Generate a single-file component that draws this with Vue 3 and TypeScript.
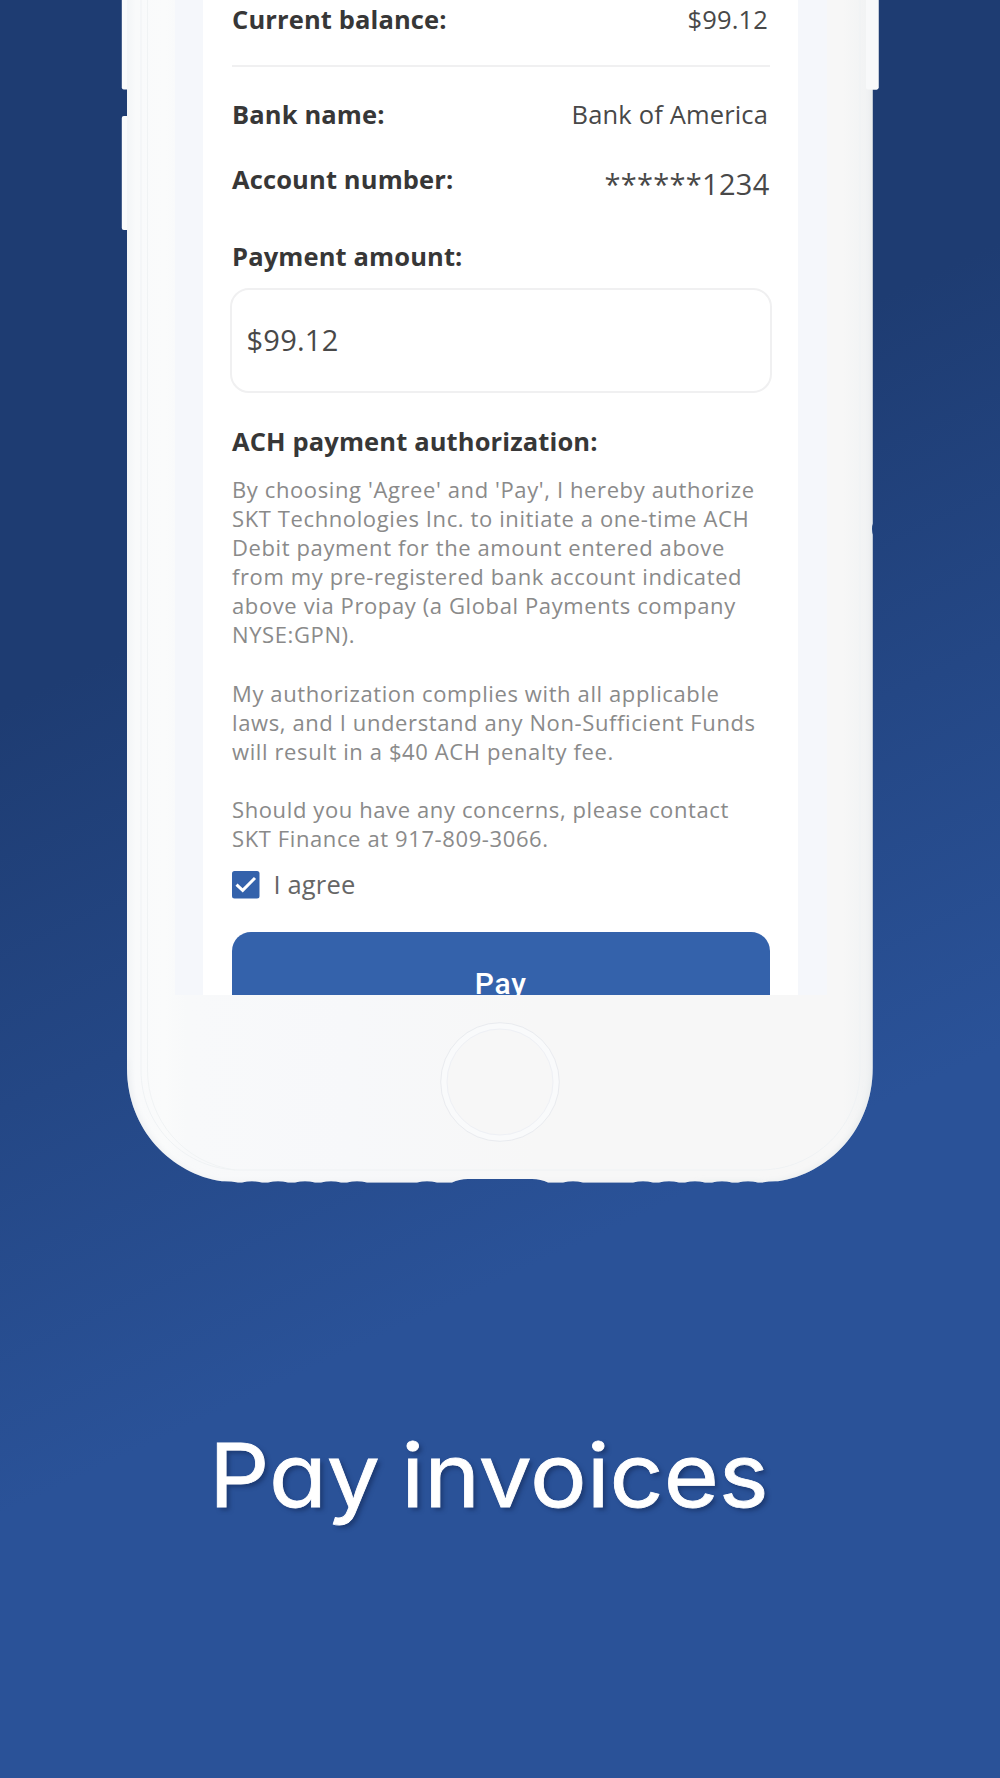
<script setup lang="ts">
interface Detail {
  label: string
  value: string
  kind: string
}

const details: Detail[] = [
  { label: 'Current balance:', value: '$99.12', kind: 'balance' },
  { label: 'Bank name:', value: 'Bank of America', kind: 'bank' },
  { label: 'Account number:', value: '******1234', kind: 'account' },
]

const terms: string[][] = [
  [
    "By choosing 'Agree' and 'Pay', I hereby authorize",
    'SKT Technologies Inc. to initiate a one-time ACH',
    'Debit payment for the amount entered above',
    'from my pre-registered bank account indicated',
    'above via Propay (a Global Payments company',
    'NYSE:GPN).',
  ],
  [
    'My authorization complies with all applicable',
    'laws, and I understand any Non-Sufficient Funds',
    'will result in a $40 ACH penalty fee.',
  ],
  [
    'Should you have any concerns, please contact',
    'SKT Finance at 917-809-3066.',
  ],
]

// Small speaker and screw recesses along the bottom edge, drawn right to left.
const recess = (x: number): string =>
  `H${x + 10} Q${x + 5} 1181.300 ${x} 1181.300 Q${x - 5} 1181.300 ${x - 10} 1182.5 `
const rightRecesses = [748, 722, 695, 669, 643, 573].map(recess).join('')
const leftRecesses = [427, 357, 331, 305, 278, 252].map(recess).join('')
const outline =
  'M872.7 -20 V1068 C872.7 1130 828 1174 778 1181.300 Q770 1181 762 1182.500 ' +
  `${rightRecesses}H548 Q541 1179 532 1179 H468 Q459 1179 452 1182.5 ${leftRecesses}` +
  'H238 Q230 1181 222 1181.300 C172 1174 127 1130 127 1068 V-20 Z'
</script>

<template>
  <main class="poster">
    <section class="phone">
      <svg class="frame" width="1000" height="1200" viewBox="0 0 1000 1200" aria-hidden="true">
        <defs>
          <linearGradient id="shell" x1="127" x2="873" y1="0" y2="0" gradientUnits="userSpaceOnUse">
            <stop offset="0" stop-color="#f3f5f7" />
            <stop offset=".012" stop-color="#f9fafb" />
            <stop offset=".05" stop-color="#fafbfb" />
            <stop offset=".08" stop-color="#f8f9fa" />
            <stop offset=".3" stop-color="#f7f8fa" />
            <stop offset=".55" stop-color="#f7f7f7" />
            <stop offset=".96" stop-color="#f7f7f7" />
            <stop offset="1" stop-color="#f0f2f3" />
          </linearGradient>
          <clipPath id="shell-clip"><path :d="outline" /></clipPath>
          <filter id="soft" x="-5%" y="-5%" width="110%" height="110%">
            <feGaussianBlur stdDeviation="3" />
          </filter>
        </defs>
        <rect x="121.8" y="-10" width="12" height="99.500" rx="2" fill="#fafbfc" />
        <rect x="121.8" y="116" width="12" height="114" rx="2" fill="#fafbfc" />
        <rect x="866" y="-10" width="12.500" height="99.500" rx="2" fill="#f8f9fa" />
        <path :d="outline" fill="url(#shell)" />
        <g clip-path="url(#shell-clip)">
          <path
            d="M700 1186 H760 C826 1186 875 1130 875 1068 V-20"
            fill="none" stroke="#dde2e6" stroke-opacity=".7" stroke-width="6" filter="url(#soft)"
          />
          <path
            d="M125 1060 C125 1130 171 1178 220 1185 H760"
            fill="none" stroke="#e6e9ec" stroke-width="4" filter="url(#soft)"
          />
          <path d="M141 -10 V1070 C141 1128 187 1170 240 1170 H760 C815 1170 860 1126 860 1070 V-10" fill="none" stroke="#eff2f4" />
          <path d="M147.500 -10 V1070 C147.500 1120 184 1163 235 1170" fill="none" stroke="#f0f3f4" />
        </g>
        <rect x="866" y="-10" width="12.500" height="99.500" rx="2" fill="#f8f9fa" />
        <path d="M873.500 522 Q870.500 529 873.500 536 Z" fill="#21427d" />
        <circle cx="500" cy="1082" r="59.300" fill="#f9fafb" stroke="#e9ebef" />
        <circle cx="500" cy="1082" r="53" fill="#f7f7f7" stroke="#eef0f5" />
      </svg>

      <div class="display">
        <div class="screen">
          <div v-for="d in details" :key="d.kind" class="row" :class="d.kind">
            <strong class="label">{{ d.label }}</strong>
            <span class="value">{{ d.value }}</span>
          </div>

          <strong class="label amount-label">Payment amount:</strong>
          <div class="input">$99.12</div>

          <strong class="label ach-label">ACH payment authorization:</strong>
          <div class="terms">
            <p v-for="(paragraph, i) in terms" :key="i">
              <span v-for="line in paragraph" :key="line" class="line">{{ line }}</span>
            </p>
          </div>

          <div class="agree">
            <svg width="28" height="28" viewBox="0 0 28 28" aria-hidden="true">
              <rect width="27.500" height="27.500" rx="2.500" fill="#3462ab" />
              <path d="M4.500 13.600 L10.700 19.300 L23 7" fill="none" stroke="#fff" stroke-width="3" />
            </svg>
            <span>I agree</span>
          </div>
          <button class="pay" type="button">Pay</button>
        </div>
      </div>
    </section>

    <h1 class="headline">Pay invoices</h1>
  </main>
</template>

<style>
body {
  margin: 0;
}
</style>

<style scoped>
.poster {
  width: 1000px;
  height: 1778px;
  overflow: hidden;
  background: linear-gradient(155deg, #1e3c72 31.5%, #2a5298 67.5%);
  font-family: 'Open Sans', 'Noto Sans', sans-serif;
}

.phone {
  position: relative;
  height: 1200px;
}

.frame {
  position: absolute;
  inset: 0;
}

.display {
  position: relative;
  width: 652px;
  height: 995px;
  margin-left: 175px;
  overflow: hidden;
  background: #f5f7fb;
}

.screen {
  box-sizing: border-box;
  width: 595px;
  height: 100%;
  margin-left: 28px;
  padding: 0 28.5px 0 29px;
  display: flex;
  flex-direction: column;
  background: #fff;
  color: #484848;
}

.row {
  display: flex;
  flex: none;
  justify-content: space-between;
  align-items: center;
  box-sizing: border-box;
}

.label {
  flex: none;
  color: #373737;
  font-size: 25.5px;
  font-weight: 700;
  letter-spacing: 0.13px;
  line-height: 40px;
  white-space: nowrap;
}

.value {
  padding-right: 1.5px;
  font-size: 25.5px;
  letter-spacing: 0.15px;
  line-height: 40px;
}

.balance {
  height: 67px;
  padding-bottom: 27px;
  border-bottom: 2px solid #f0f0f1;
}

.bank {
  height: 93px;
}

.account {
  height: 38px;
}

.account .value {
  padding: 9px 0 0;
  font-size: 29px;
  letter-spacing: 0.28px;
}

.amount-label {
  margin-top: 37.5px;
}

.input {
  flex: none;
  box-sizing: border-box;
  height: 105px;
  margin: 12px -2px 0;
  padding-left: 14.5px;
  border: 2px solid #f0f0f1;
  border-radius: 19px;
  font-size: 29px;
  letter-spacing: 0.25px;
  line-height: 100px;
}

.ach-label {
  margin-top: 28.5px;
}

.terms {
  flex: none;
  margin-top: 14.1px;
  color: #8a8a8a;
  font-size: 22px;
  line-height: 29.08px;
  letter-spacing: 0.61px;
  white-space: nowrap;
}

.terms p {
  margin: 0 0 29.08px;
}

.terms p:last-child {
  margin-bottom: 0;
}

.line {
  display: block;
}

.agree {
  display: flex;
  flex: none;
  align-items: center;
  gap: 13.5px;
  height: 28px;
  margin-top: 17.9px;
  color: #666;
  font-size: 25.5px;
  letter-spacing: 0.15px;
  line-height: 28px;
}

.agree span {
  padding-bottom: 1.5px;
}

.pay {
  flex: none;
  height: 102px;
  margin-top: 33px;
  padding: 0;
  border: 0;
  border-radius: 19px;
  background: #3462ab;
  color: #fff;
  font: 500 30px Roboto, sans-serif;
  letter-spacing: 0.8px;
}

.headline {
  width: max-content;
  margin: 222px 0 0 208.5px;
  color: #fff;
  font: 400 88px/106px Inter, sans-serif;
  font-feature-settings: 'cv11' 1;
  word-spacing: -5px;
  white-space: nowrap;
  text-shadow: 3px 3px 4px rgba(15, 35, 80, 0.5);
  -webkit-text-stroke: 0.8px #fff;
  transform: scaleX(1.075);
  transform-origin: left;
}
</style>
